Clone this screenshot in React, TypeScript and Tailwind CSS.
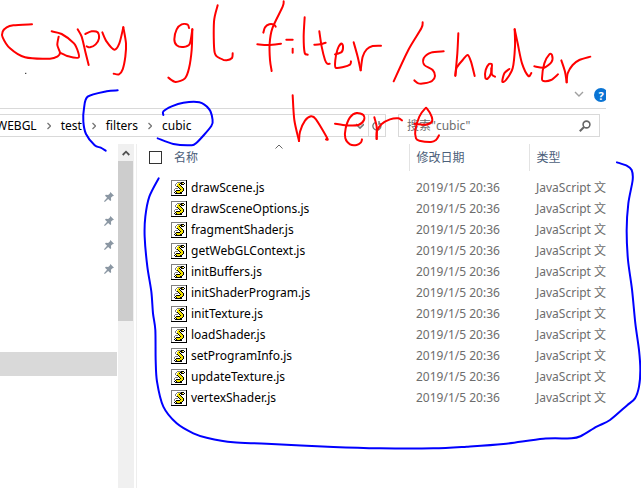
import React from "react";

type Point = [number, number];
type Stroke = { at?: Point; pts: number[] };

const files = [
  "drawScene.js",
  "drawSceneOptions.js",
  "fragmentShader.js",
  "getWebGLContext.js",
  "initBuffers.js",
  "initShaderProgram.js",
  "initTexture.js",
  "loadShader.js",
  "setProgramInfo.js",
  "updateTexture.js",
  "vertexShader.js",
];

// Pen samples, three units to a pixel. `at` shifts a stroke on the canvas.
const B: Point = [630, 0];
const C: Point = [1263, 0];

const redInk: Stroke[] = [
  { pts: [96, 73, 40, 76, 20, 82, 8, 95, 8, 112, 30, 145, 75, 172, 150, 176, 173, 169, 180, 158, 172, 135, 176, 110] },
  { pts: [155, 94, 185, 102, 222, 130, 235, 158, 235, 173, 205, 169, 180, 158] },
  { pts: [233, 88, 245, 110, 256, 155, 266, 195] },
  { pts: [256, 102, 275, 94, 293, 97, 297, 115, 287, 133, 270, 142, 260, 139] },
  { pts: [307, 97, 320, 125, 343, 149, 358, 130, 370, 82] },
  { pts: [370, 82, 378, 130, 376, 170, 368, 208, 357, 223, 341, 221] },
  { pts: [567, 84, 563, 74, 545, 73, 530, 88, 523, 118, 530, 136, 550, 141, 569, 132, 577, 88] },
  { pts: [577, 88, 575, 150, 567, 205, 555, 235, 527, 246, 505, 233] },
  { at: B, pts: [23, 16, 12, 65, 14, 158, 35, 177, 50, 181, 66, 174, 68, 160] },
  { at: B, pts: [221, 4, 218, 20, 187, 85, 179, 130, 180, 180, 185, 213] },
  { at: B, pts: [160, 98, 165, 82, 178, 73, 192, 74, 197, 80] },
  { at: B, pts: [142, 133, 175, 135, 213, 131] },
  { at: B, pts: [229, 119, 248, 119] },
  { at: B, pts: [248, 146, 248, 158] },
  { at: B, pts: [284, 52, 281, 110, 284, 158, 293, 164] },
  { at: B, pts: [328, 94, 335, 140, 345, 180, 352, 191, 359, 191] },
  { at: B, pts: [313, 134, 330, 133, 347, 128] },
  { at: B, pts: [375, 163, 395, 156, 399, 138, 393, 131, 382, 150, 376, 180, 377, 203, 400, 201, 420, 194, 423, 184] },
  { at: B, pts: [431, 127, 443, 170, 452, 211] },
  { at: B, pts: [452, 211, 458, 170, 470, 148, 488, 138, 513, 137] },
  { at: B, pts: [638, 67, 634, 85, 595, 150, 551, 244] },
  { at: C, pts: [68, 154, 30, 158, 8, 175, 10, 195, 35, 210, 42, 228, 33, 243, 10, 250, -8, 250, -20, 241] },
  { at: C, pts: [112, 100, 109, 160, 103, 227] },
  { at: C, pts: [103, 227, 107, 203, 125, 180, 140, 165, 150, 185, 161, 228] },
  { at: C, pts: [212, 192, 204, 192, 194, 210, 193, 233, 200, 236, 210, 220, 213, 195] },
  { at: C, pts: [211, 205, 213, 224, 222, 230] },
  { at: C, pts: [265, 207, 250, 220, 244, 245, 255, 240, 275, 205, 282, 140, 281, 88] },
  { at: C, pts: [281, 88, 290, 130, 303, 190, 322, 228, 331, 219] },
  { at: C, pts: [340, 199, 370, 203, 392, 185, 393, 165, 385, 163, 370, 190, 363, 235, 368, 243, 390, 240, 411, 223] },
  { at: C, pts: [421, 181, 432, 215, 437, 247] },
  { at: C, pts: [437, 247, 440, 220, 455, 195, 475, 180, 508, 170] },
  { at: B, pts: [248, 286, 253, 360, 267, 423] },
  { at: B, pts: [267, 423, 270, 395, 285, 362, 303, 349, 318, 358, 352, 415, 348, 418] },
  { at: B, pts: [375, 371, 410, 376, 445, 375, 462, 360, 460, 345, 440, 339, 420, 352, 407, 385, 406, 415, 420, 433, 440, 435, 453, 427, 456, 418] },
  { at: B, pts: [493, 352, 500, 380, 500, 417] },
  { at: B, pts: [500, 417, 501, 393, 515, 372, 540, 358, 565, 355, 576, 361] },
  { at: C, pts: [-20, 371, 12, 374, 32, 366, 32, 350, 18, 326, 12, 326, -5, 350, -17, 390, -15, 415, -5, 422, 30, 426, 45, 420, 54, 406] },
];

const blueInk: Stroke[] = [
  { pts: [353, 271, 320, 274, 263, 290, 252, 325, 250, 365, 258, 402, 284, 436, 302, 443, 317, 452] },
  { pts: [490, 345, 490, 334, 515, 319, 550, 308, 598, 307, 627, 327, 637, 355, 634, 378, 588, 430, 570, 436, 520, 432, 473, 415] },
  {
    pts: [
      476, 535, 448, 590, 436, 650, 434, 710, 442, 800, 454, 875, 459, 940, 466, 990, 467, 1080, 471, 1145,
      490, 1220, 530, 1270, 580, 1300, 620, 1313, 700, 1327, 800, 1331, 1000, 1341, 1140, 1345, 1300, 1345,
      1400, 1340, 1510, 1332, 1630, 1316, 1715, 1315, 1743, 1308, 1790, 1280, 1830, 1260, 1880, 1217, 1905, 1195,
      1917, 1160, 1921, 1110, 1917, 1050, 1906, 970, 1896, 868, 1884, 780, 1880, 690, 1885, 610, 1898, 540,
      1895, 510, 1880, 497, 1851, 487,
    ],
  },
];

// Joins pen samples with a smooth curve.
function inkPath({ at = [0, 0], pts }: Stroke): string {
  const p: Point[] = [];
  for (let i = 0; i < pts.length; i += 2) p.push([pts[i] + at[0], pts[i + 1] + at[1]]);
  let d = `M${p[0][0]} ${p[0][1]}`;
  for (let i = 0; i < p.length - 1; i++) {
    const a = p[Math.max(i - 1, 0)];
    const b = p[i];
    const c = p[i + 1];
    const e = p[Math.min(i + 2, p.length - 1)];
    d += `C${b[0] + (c[0] - a[0]) / 7} ${b[1] + (c[1] - a[1]) / 7} ${c[0] - (e[0] - b[0]) / 7} ${c[1] - (e[1] - b[1]) / 7} ${c[0]} ${c[1]}`;
  }
  return d;
}

function Ink() {
  return (
    <svg
      className="pointer-events-none absolute left-0 top-0 h-[488px] w-[641px]"
      viewBox="0 0 1923 1464"
      fill="none"
      strokeWidth="6"
      strokeLinecap="round"
      strokeLinejoin="round"
      role="img"
      aria-label="Copy gl filter/shader here"
    >
      <g stroke="#ff0000">{redInk.map((s, i) => <path key={i} d={inkPath(s)} />)}</g>
      <g stroke="#0000ff">{blueInk.map((s, i) => <path key={i} d={inkPath(s)} />)}</g>
      <path d="M75 220h4" stroke="#222" strokeWidth="3" strokeLinecap="butt" />
    </svg>
  );
}

// 16×16 script file icon: g grey, w white, k black, y yellow.
const scriptPixels = [
  "gggggggggggggggk",
  "gwwwwwwwwwwwwwwk",
  "gwwwwwggggkkkwwk",
  "gwwwwgwyykkywkwk",
  "gwwwgwyykwkkkwwk",
  "gwwwgwyyykwwwwwk",
  "gwwwwgkyyykwwwwk",
  "gwwwwwwkyyykwwwk",
  "gwwwgggwkyyykwwk",
  "gwwgwwwwwkyykwwk",
  "gwwgwkkkkyyykwwk",
  "gwwwkyyyyyykwwwk",
  "gwwkwkyyykkwwwwk",
  "gwwwkkkkkkkwwwwk",
  "gwwwwwwwwwwwwwwk",
  "kkkkkkkkkkkkkkkk",
];
const scriptColours: Record<string, string> = { g: "#808080", w: "#ffffff", k: "#000000", y: "#f0e000" };

function ScriptIcon() {
  return (
    <svg className="size-4 shrink-0" viewBox="0 0 16 16" shapeRendering="crispEdges" aria-hidden="true">
      {scriptPixels.map((row, y) =>
        [...row].map((c, x) => <rect key={`${x}-${y}`} x={x} y={y} width="1" height="1" fill={scriptColours[c]} />),
      )}
    </svg>
  );
}

function Pin() {
  return (
    <svg className="size-2.5" viewBox="0 0 12 12" fill="#8b97a3" aria-hidden="true">
      <path d="M7.600 0 12 4.400 10.200 5 8.300 7 8.600 9.800 7.600 10.700 5 8.300 1 12 0 11 3.700 7 1.200 4.400 2.200 3.400 5 3.700 7 1.800z" />
    </svg>
  );
}

function Crumb({ children, last }: { children: string; last?: boolean }) {
  return (
    <>
      <a href="#" className="shrink-0 text-black">{children}</a>
      {!last && (
        <svg className="mr-2.5 ml-2.5 h-2 w-1 shrink-0" viewBox="0 0 4 8" fill="none" stroke="#777" strokeWidth="1.3" aria-hidden="true">
          <path d="M.5 1 3.5 4 .5 7" />
        </svg>
      )}
    </>
  );
}

export default function App() {
  return (
    <div className="relative min-h-screen overflow-hidden bg-white pr-[35px] font-['Noto_Sans','Noto_Sans_CJK_SC',sans-serif] text-xs text-black">
      <div className="flex h-[109px] items-end justify-end gap-2.5 overflow-hidden border-b border-[#d9d9d9] pb-1.5">
        <button aria-label="展开功能区" className="flex h-4 items-center">
          <svg className="h-2 w-2.5" viewBox="0 0 10 8" fill="none" stroke="#a0a0a0" strokeWidth="1.4">
            <path d="M1 2l4 4 4-4" />
          </svg>
        </button>
        <button
          aria-label="帮助"
          className="-mr-0.5 flex size-3.5 shrink-0 items-center justify-center rounded-full bg-[#0a74d4] text-[11px] leading-none font-bold text-white"
        >
          ?
        </button>
      </div>

      <div className="flex gap-3 pt-[5px] pr-1.5">
        <nav aria-label="地址" className="flex h-[23px] min-w-0 flex-1 items-center border border-l-0 border-[#d9d9d9]">
          <div className="-ml-1 flex flex-1 items-center">
            <Crumb>WEBGL</Crumb>
            <Crumb>test</Crumb>
            <Crumb>filters</Crumb>
            <Crumb last>cubic</Crumb>
          </div>
          <button aria-label="以前的位置" className="flex h-full w-4 items-center justify-center">
            <svg className="h-2 w-2" viewBox="0 0 8 8" fill="none" stroke="#777" strokeWidth="1.6">
              <path d="M0 2l4 4 4-4" />
            </svg>
          </button>
          <button aria-label="刷新" className="flex h-full w-[17px] items-center justify-center border-l border-[#d9d9d9]">
            <svg className="size-2.5" viewBox="0 0 10 10" fill="none" stroke="#777" strokeWidth="1.4">
              <path d="M3 1.5A4 4 0 1 0 7.5 2M7 0v3h3" />
            </svg>
          </button>
        </nav>
        <label className="flex h-[23px] w-[202px] shrink-0 items-center border border-[#d9d9d9] pr-2 pl-2">
          <input
            type="search"
            aria-label="搜索"
            placeholder={'搜索"cubic"'}
            className="min-w-0 flex-1 bg-transparent outline-none placeholder:text-[#6d6d6d]"
          />
          <svg className="size-3" viewBox="0 0 12 12" fill="none" stroke="#666" strokeWidth="1.6" aria-hidden="true">
            <circle cx="7.5" cy="4.5" r="3.4" />
            <path d="M5 7 .8 11.2" strokeWidth="2" />
          </svg>
        </label>
      </div>

      <div className="flex pt-[7px]">
        <aside className="h-[344px] w-[118px] shrink-0">
          <ul className="flex h-[208px] flex-col items-end gap-3.5 pt-12 pr-1">
            {[0, 1, 2, 3].map((n) => (
              <li key={n}>
                <Pin />
              </li>
            ))}
          </ul>
          <div className="mr-px h-6 bg-[#d9d9d9]" />
        </aside>
        <div className="h-[344px] w-4 shrink-0 bg-[#f0f0f0]">
          <button aria-label="向上滚动" className="flex h-[17px] w-4 items-center justify-center">
            <svg className="h-2 w-2" viewBox="0 0 8 8" fill="none" stroke="#505050" strokeWidth="1.8">
              <path d="M.7 6 4 2.7 7.3 6" />
            </svg>
          </button>
          <div className="mr-px h-[160px] bg-[#cdcdcd]" />
        </div>
        <main className="relative ml-0.5 min-w-0 flex-1 overflow-hidden border-l border-[#eee]">
          <svg className="absolute top-0 left-[138px] h-1.5 w-2" viewBox="0 0 8 6" fill="none" stroke="#666" aria-hidden="true">
            <path d="M.5 4.5 4 1 7.500 4.500" />
          </svg>
          <table className="w-full table-fixed border-collapse text-left whitespace-nowrap">
            <thead className="text-[#4c607a]">
              <tr className="h-[27px]">
                <th className="w-[272px] border-r border-[#e3e3e3] p-0 pl-3 font-normal">
                  <div className="flex items-center gap-3">
                    <input
                      type="checkbox"
                      aria-label="全选"
                      className="size-[13px] appearance-none border border-[#333] bg-white"
                    />
                    名称
                  </div>
                </th>
                <th className="w-[120px] border-r border-[#e3e3e3] p-0 pl-[7px] font-normal">修改日期</th>
                <th className="p-0 pl-[7px] font-normal">类型</th>
              </tr>
            </thead>
            <tbody className="text-[#6d6d6d]">
              <tr className="h-1.5" aria-hidden="true" />
              {files.map((name) => (
                <tr key={name} className="h-[21px]">
                  <td className="p-0 pl-[34px] text-black">
                    <div className="flex items-center gap-1">
                      <ScriptIcon />
                      {name}
                    </div>
                  </td>
                  <td className="p-0 pl-[7px]">2019/1/5 20:36</td>
                  <td className="p-0 pl-[7px]">JavaScript 文</td>
                </tr>
              ))}
            </tbody>
          </table>
        </main>
      </div>

      <Ink />
    </div>
  );
}
